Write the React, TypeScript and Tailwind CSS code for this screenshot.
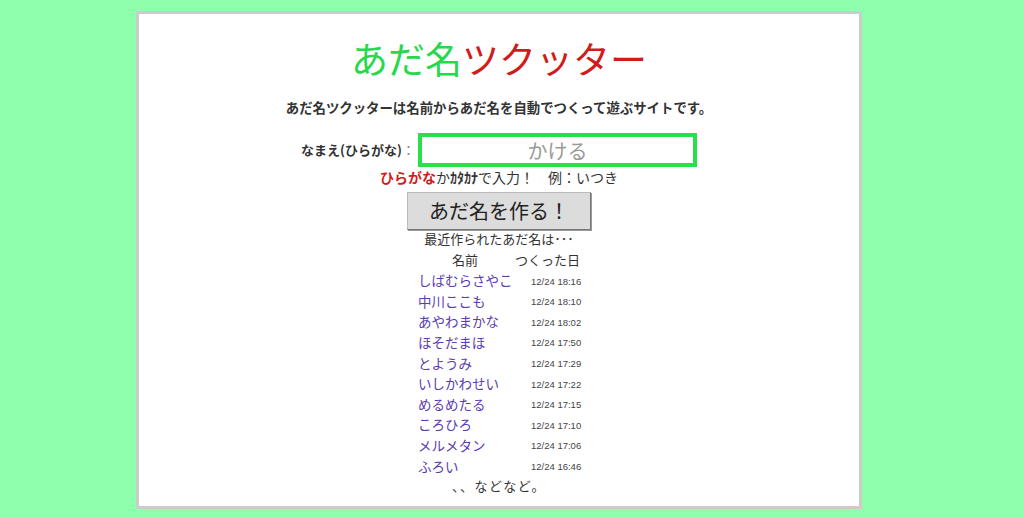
import React from 'react'

const recent = [
  { name: 'しばむらさやこ', date: '12/24 18:16' },
  { name: '中川ここも', date: '12/24 18:10' },
  { name: 'あやわまかな', date: '12/24 18:02' },
  { name: 'ほそだまほ', date: '12/24 17:50' },
  { name: 'とようみ', date: '12/24 17:29' },
  { name: 'いしかわせい', date: '12/24 17:22' },
  { name: 'めるめたる', date: '12/24 17:15' },
  { name: 'ころひろ', date: '12/24 17:10' },
  { name: 'メルメタン', date: '12/24 17:06' },
  { name: 'ふろい', date: '12/24 16:46' },
]

export default function App() {
  return (
    <div
      className="h-[517px] w-full bg-[#8effaa] pt-[11px]"
      style={{ fontFamily: '"Noto Sans CJK JP", "Noto Sans", sans-serif' }}
    >
      {/* Card */}
      <div className="ml-[136px] flex h-[498px] w-[726px] flex-col items-center border-[3px] border-[#cbcbcb] bg-white text-[#333]">
        {/* Title */}
        <h1 className="mt-[22px] text-[37px] leading-[44px] font-normal">
          <span className="text-[#26d94c]">あだ名</span>
          <span className="text-[#d01c1c]">ツクッター</span>
        </h1>
        <p className="mt-[17px] text-[13.4px] leading-[20px] font-bold text-[#333]">
          あだ名ツクッターは名前からあだ名を自動でつくって遊ぶサイトです。
        </p>

        {/* Input */}
        <div className="mt-[16px] flex h-[34px] items-center">
          <label className="mr-[3px] text-[13px] font-bold text-[#333]">
            なまえ(ひらがな)<span className="font-normal text-[#888]">：</span>
          </label>
          <input
            type="text"
            placeholder="かける"
            className="h-[34px] w-[279px] border-4 border-[#27e04a] bg-white text-center text-[20px] text-[#333] placeholder:text-[#9a9a9a] focus:outline-none"
          />
        </div>
        <p className="h-[20px] text-[14px] leading-[20px] text-[#333]">
          <span className="font-bold text-[#d01c1c]">ひらがな</span>か<span className="font-bold">ｶﾀｶﾅ</span>で入力！　例：いつき
        </p>

        {/* Button */}
        <button className="mt-[5px] h-[38px] w-[184px] border border-[#bbb] border-r-[#777] border-b-[#777] bg-[#dcdcdc] text-[20px] leading-none text-[#222] shadow-[1px_1px_0_#999]">
          あだ名を作る！
        </button>

        {/* Recent */}
        <p className="h-[18px] text-[13px] leading-[18px] text-[#333]">最近作られたあだ名は･･･</p>
        <div className="mt-[2px] w-[162px]">
          <div className="flex h-[20px] items-center text-[13px] text-[#333]">
            <span className="ml-[34px]">名前</span>
            <span className="ml-auto">つくった日</span>
          </div>
          {recent.map((r) => (
            <div key={r.date} className="flex h-[20.6px] items-center whitespace-nowrap">
              <span className="w-[113px] shrink-0 text-[13.5px] text-[#5b3db0]">{r.name}</span>
              <span
                className="mt-[3px] shrink-0 text-[9.5px] text-[#444]"
                style={{ fontFamily: '"Liberation Sans", Arial, sans-serif' }}
              >
                {r.date}
              </span>
            </div>
          ))}
        </div>
        <p className="h-[20px] text-[13px] leading-[20px] tracking-[1.5px] text-[#333]">、、などなど。</p>
      </div>
    </div>
  )
}
